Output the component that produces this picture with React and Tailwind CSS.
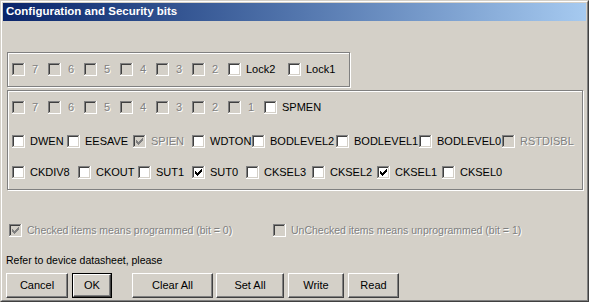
const FONT = "font-['Liberation_Sans',Arial,sans-serif]";

function Box({ checked, disabled }) {
  const mark = disabled ? "#808080" : "#000000";
  return (
    <svg width="13" height="13" viewBox="0 0 13 13" shapeRendering="crispEdges" className="shrink-0">
      <rect x="0" y="0" width="13" height="13" fill="#ffffff" />
      <rect x="0" y="0" width="12" height="12" fill="#808080" />
      <rect x="1" y="1" width="11" height="11" fill="#d4d0c8" />
      <rect x="1" y="1" width="10" height="10" fill="#404040" />
      <rect x="2" y="2" width="9" height="9" fill={disabled ? "#d4d0c8" : "#ffffff"} />
      {checked &&
        [5, 6, 7, 6, 5, 4, 3].map((y, i) => (
          <rect key={i} x={3 + i} y={y} width="1" height="3" fill={mark} />
        ))}
    </svg>
  );
}

function Item({ label, w = "", checked, disabled, digit, small }) {
  return (
    <div className={`flex items-center shrink-0 ${w}`}>
      <Box checked={checked} disabled={disabled} />
      <span
        className={`whitespace-nowrap leading-none ${small ? "text-[10.5px]" : "text-[11px]"} ${
          digit ? "ml-[7px]" : "ml-[5px]"
        } ${disabled ? "text-[#808080] [text-shadow:1px_1px_0_#ffffff]" : "text-black"}`}
      >
        {label}
      </span>
    </div>
  );
}

function Btn({ children, w, isDefault }) {
  return (
    <div className={`h-[25px] shrink-0 ${w} ${isDefault ? "border border-black" : ""}`}>
      <div className="flex h-full w-full items-center justify-center border-t border-l border-t-white border-l-white border-r border-b border-r-[#404040] border-b-[#404040] shadow-[inset_-1px_-1px_0_#808080] text-[11px] leading-none text-black">
        {children}
      </div>
    </div>
  );
}

const digits = ["7", "6", "5", "4", "3", "2"];

const row3 = [
  { label: "DWEN", w: "w-[55px]" },
  { label: "EESAVE", w: "w-[66px]" },
  { label: "SPIEN", w: "w-[59px]", checked: true, disabled: true },
  { label: "WDTON", w: "w-[60px]" },
  { label: "BODLEVEL2", w: "w-[84px]" },
  { label: "BODLEVEL1", w: "w-[83px]" },
  { label: "BODLEVEL0", w: "w-[83px]" },
  { label: "RSTDISBL", disabled: true },
];

const row4 = [
  { label: "CKDIV8", w: "w-[66px]" },
  { label: "CKOUT", w: "w-[60px]" },
  { label: "SUT1", w: "w-[54px]" },
  { label: "SUT0", w: "w-[54px]", checked: true },
  { label: "CKSEL3", w: "w-[66px]" },
  { label: "CKSEL2", w: "w-[65px]" },
  { label: "CKSEL1", w: "w-[65px]", checked: true },
  { label: "CKSEL0" },
];

const group = "border border-[#808080] shadow-[inset_1px_1px_0_#ffffff,1px_1px_0_#ffffff]";

export default function App() {
  return (
    <div className={`w-[589px] h-[302px] overflow-hidden bg-[#d4d0c8] ${FONT}`}>
      <div className="h-full w-full border-t border-l border-t-[#d4d0c8] border-l-[#d4d0c8] border-r border-b border-r-[#404040] border-b-[#404040]">
        <div className="flex h-full w-full flex-col border-t border-l border-t-white border-l-white border-r border-b border-r-[#808080] border-b-[#808080] p-px">
          <div className="flex h-[18px] shrink-0 items-center bg-linear-to-r from-[#0a246a] to-[#a6caf0] pl-[3px]">
            <span className="text-[11.5px] font-bold leading-none text-white">
              Configuration and Security bits
            </span>
          </div>

          {/* lock bits */}
          <div className={`ml-[4px] mt-[31px] w-[343px] pl-[4px] pt-[6px] pb-[7px] ${group}`}>
            <div className="flex h-[20px] items-center">
              {digits.map((d) => (
                <Item key={d} label={d} w="w-[36px]" digit disabled />
              ))}
              <Item label="Lock2" w="w-[60px]" />
              <Item label="Lock1" />
            </div>
          </div>

          {/* fuse bits */}
          <div className={`ml-[4px] mt-[3px] w-[576px] pl-[4px] pt-[6px] pb-[7px] ${group}`}>
            <div className="flex h-[20px] items-center">
              {[...digits, "1"].map((d) => (
                <Item key={d} label={d} w="w-[36px]" digit disabled />
              ))}
              <Item label="SPMEN" />
            </div>
            <div className="mt-[14px] flex h-[20px] items-center">
              {row3.map((it) => (
                <Item key={it.label} {...it} />
              ))}
            </div>
            <div className="mt-[11px] flex h-[20px] items-center">
              {row4.map((it) => (
                <Item key={it.label} {...it} />
              ))}
            </div>
          </div>

          <div className="ml-[6px] mt-[30px] flex h-[20px] items-center">
            <Item label="Checked items means programmed (bit = 0)" w="w-[264px]" checked disabled small />
            <Item label="UnChecked items means unprogrammed (bit = 1)" disabled small />
          </div>

          <div className="ml-[3px] mt-[13px] h-[14px] text-[10.5px] leading-[14px] text-black">
            Refer to device datasheet, please
          </div>

          <div className="ml-[3px] mt-[6px] flex items-center">
            <Btn w="w-[62px]">Cancel</Btn>
            <div className="ml-[4px]">
              <Btn w="w-[40px]" isDefault>OK</Btn>
            </div>
            <div className="ml-[20px] flex gap-[3px]">
              <Btn w="w-[81px]">Clear All</Btn>
              <Btn w="w-[68px]">Set All</Btn>
            </div>
            <div className="ml-[4px] flex gap-[4px]">
              <Btn w="w-[56px]">Write</Btn>
              <Btn w="w-[51px]">Read</Btn>
            </div>
          </div>
        </div>
      </div>
    </div>
  );
}
